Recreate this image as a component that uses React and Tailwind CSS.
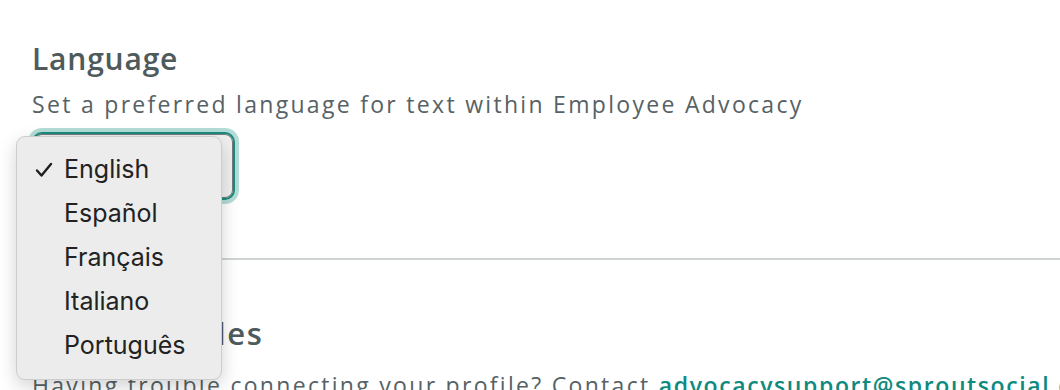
import React from 'react';

const languages = ['English', 'Español', 'Français', 'Italiano', 'Português'];

export default function App() {
  return (
    <div className="relative w-[1060px] h-[390px] overflow-hidden bg-white font-['Open_Sans',sans-serif]">
      <div className="pl-8 pt-[41px]">
        {/* Language section */}
        <h2 className="text-[30px] leading-[36px] font-semibold tracking-[0.8px] text-[#4e5a5c]">Language</h2>
        <p className="mt-[12px] text-[23px] leading-[30px] tracking-[2.3px] text-[#566265] whitespace-nowrap">
          Set a preferred language for text within Employee Advocacy
        </p>
        <div className="mt-[13px] w-[203px] h-[68px] rounded-[10px] border-2 border-[#1a8a7e] ring-4 ring-[#b4dcd6] bg-[#f0f0f0] shadow-[inset_0_0_0_1px_#7a7a7a]"></div>

        <div className="mt-[58px] h-[2px] bg-[#cfd3d3]"></div>

        {/* Profiles section */}
        <h2 className="mt-[55px] text-[31px] leading-[36px] font-semibold tracking-[1.6px] text-[#4e5a5c]">Social Profiles</h2>
        <p className="mt-[19px] text-[23px] leading-[30px] tracking-[2.3px] text-[#566265] whitespace-nowrap">
          Having trouble connecting your profile? Contact{' '}
          <span className="font-semibold tracking-[1.6px] text-[#0f8a7f]">advocacysupport@sproutsocial.com</span>
        </p>
      </div>

      {/* open native menu */}
      <div className="absolute left-[16px] top-[136px] w-[206px] rounded-[9px] border border-[#cdcdcd] bg-[#ececec] py-[11px] shadow-[0_6px_18px_rgba(0,0,0,0.18)] font-['Inter',sans-serif]">
        {languages.map((lang, i) => (
          <div key={lang} className="flex items-center h-[44px] text-[25px] text-[#222]">
            <span className="w-[47px] flex justify-end pr-[11px]">
              {i === 0 && (
                <svg width="18" height="16" viewBox="0 0 18 16" fill="none">
                  <path d="M2 8.5l4.5 5L16 2" stroke="#1f1f1f" strokeWidth="2.4" strokeLinecap="round" strokeLinejoin="round" />
                </svg>
              )}
            </span>
            <span>{lang}</span>
          </div>
        ))}
      </div>
    </div>
  );
}
